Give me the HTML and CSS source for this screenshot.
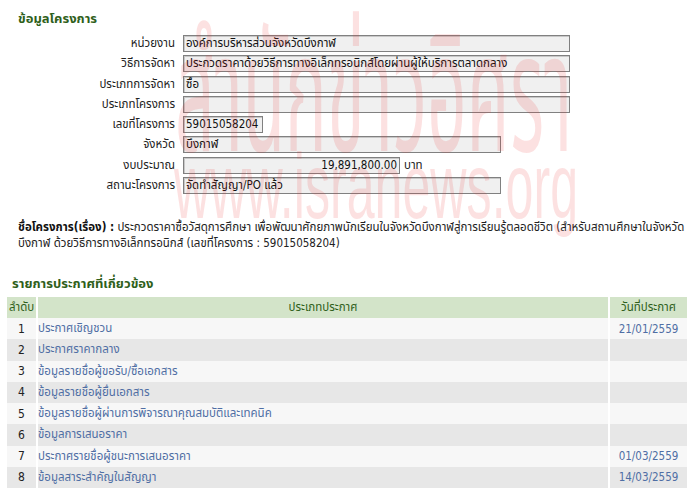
FILE: index.html
```html
<!DOCTYPE html>
<html lang="th">
<head>
<meta charset="utf-8">
<title>ข้อมูลโครงการ</title>
<link rel="stylesheet" href="styles.css">
</head>
<body>
<div class="page">
  <h2 class="section-title">ข้อมูลโครงการ</h2>
  <div class="info">
    <div class="label">หน่วยงาน</div>
    <div class="value"><span class="box w-full">องค์การบริหารส่วนจังหวัดบึงกาฬ</span></div>
    <div class="label">วิธีการจัดหา</div>
    <div class="value"><span class="box w-full">ประกวดราคาด้วยวิธีการทางอิเล็กทรอนิกส์โดยผ่านผู้ให้บริการตลาดกลาง</span></div>
    <div class="label">ประเภทการจัดหา</div>
    <div class="value"><span class="box w-full">ซื้อ</span></div>
    <div class="label">ประเภทโครงการ</div>
    <div class="value"><span class="box w-full"></span></div>
    <div class="label">เลขที่โครงการ</div>
    <div class="value"><span class="box w-num">59015058204</span></div>
    <div class="label">จังหวัด</div>
    <div class="value"><span class="box w-mid">บึงกาฬ</span></div>
    <div class="label">งบประมาณ</div>
    <div class="value"><span class="box w-budget num-right">19,891,800.00</span><span class="unit">บาท</span></div>
    <div class="label">สถานะโครงการ</div>
    <div class="value"><span class="box w-mid">จัดทำสัญญา/PO แล้ว</span></div>
  </div>

  <p class="project-name"><b>ชื่อโครงการ(เรื่อง) :</b> ประกวดราคาซื้อวัสดุการศึกษา เพื่อพัฒนาศักยภาพนักเรียนในจังหวัดบึงกาฬสู่การเรียนรู้ตลอดชีวิต (สำหรับสถานศึกษาในจังหวัดบึงกาฬ ด้วยวิธีการทางอิเล็กทรอนิกส์ (เลขที่โครงการ : 59015058204)</p>

  <h2 class="section-title list-title">รายการประกาศที่เกี่ยวข้อง</h2>
  <table class="ann">
    <thead>
      <tr><th class="c-no">ลำดับ</th><th class="c-type">ประเภทประกาศ</th><th class="c-date">วันที่ประกาศ</th></tr>
    </thead>
    <tbody>
      <tr><td class="c-no">1</td><td><a href="#">ประกาศเชิญชวน</a></td><td class="c-date"><a href="#">21/01/2559</a></td></tr>
      <tr><td class="c-no">2</td><td><a href="#">ประกาศราคากลาง</a></td><td class="c-date"></td></tr>
      <tr><td class="c-no">3</td><td><a href="#">ข้อมูลรายชื่อผู้ขอรับ/ซื้อเอกสาร</a></td><td class="c-date"></td></tr>
      <tr><td class="c-no">4</td><td><a href="#">ข้อมูลรายชื่อผู้ยื่นเอกสาร</a></td><td class="c-date"></td></tr>
      <tr><td class="c-no">5</td><td><a href="#">ข้อมูลรายชื่อผู้ผ่านการพิจารณาคุณสมบัติและเทคนิค</a></td><td class="c-date"></td></tr>
      <tr><td class="c-no">6</td><td><a href="#">ข้อมูลการเสนอราคา</a></td><td class="c-date"></td></tr>
      <tr><td class="c-no">7</td><td><a href="#">ประกาศรายชื่อผู้ชนะการเสนอราคา</a></td><td class="c-date"><a href="#">01/03/2559</a></td></tr>
      <tr><td class="c-no">8</td><td><a href="#">ข้อมูลสาระสำคัญในสัญญา</a></td><td class="c-date"><a href="#">14/03/2559</a></td></tr>
    </tbody>
  </table>

  <div class="watermark" aria-hidden="true">
    <div class="wm-th">สำนักข่าวอิศรา</div>
    <div class="wm-en">www.isranews.org</div>
  </div>
</div>
</body>
</html>
```
FILE: styles.css
```css
html, body {
  margin: 0;
  padding: 0;
  background: #ffffff;
}
body {
  font-family: Tahoma, "DejaVu Sans Condensed", "Noto Sans Thai", Loma, Garuda, sans-serif;
  font-size: 12px;
  color: #222222;
}
.page {
  position: relative;
  width: 700px;
  height: 498px;
  overflow: hidden;
}
.section-title {
  margin: 0;
  padding: 11px 0 0 18px;
  font-size: 13px;
  font-weight: bold;
  color: #2f5f1b;
  line-height: 16px;
}
.info {
  display: grid;
  grid-template-columns: 175px 1fr;
  column-gap: 8px;
  grid-auto-rows: 17px;
  row-gap: 3.3px;
  margin-top: 8px;
}
.label {
  text-align: right;
  line-height: 17px;
  font-size: 11.5px;
  color: #222;
}
.value {
  display: flex;
  align-items: center;
  gap: 4px;
}
.box {
  box-sizing: border-box;
  display: block;
  height: 17px;
  line-height: 15px;
  padding: 0 2px;
  background: #f0f0f0;
  border: 1px solid #808080;
  box-shadow: inset 1px 1px 0 #c8c8c8;
  font-size: 11.5px;
  color: #111;
  white-space: nowrap;
  overflow: hidden;
}
.w-full { width: 387px; }
.w-num { width: 80px; }
.w-mid { width: 318px; }
.w-budget { width: 217px; }
.num-right { text-align: right; }
.unit { font-size: 11.5px; }
.project-name {
  margin: 25px 0 0 0;
  padding: 0 10px 0 18px;
  line-height: 16px;
  font-size: 11.5px;
  color: #222;
}
.project-name b { color: #111; }
.list-title {
  padding: 25px 0 0 12px;
}
.ann {
  margin: 5px 0 0 7px;
  width: 680px;
  border-collapse: collapse;
  font-size: 11.5px;
}
.ann th {
  background: #d3e4c9;
  color: #2f5f1b;
  font-weight: normal;
  height: 21px;
  padding: 0;
  border-right: 2px solid #ffffff;
}
.ann th:last-child, .ann td:last-child { border-right: 0; }
.ann td {
  height: 21.25px;
  padding: 0;
  border-right: 2px solid #ffffff;
}
.ann tbody tr:nth-child(odd) td { background: #f7f7f7; }
.ann tbody tr:nth-child(even) td { background: #e7e7e7; }
.ann th.c-no { width: 27px; text-align: left; padding-left: 2px; }
.ann td.c-no { text-align: center; color: #222; font-size: 12px; }
.ann .c-date { width: 77px; text-align: center; }
.ann td a { color: #4f6ea4; text-decoration: none; }
.ann tbody td:nth-child(2) { padding-left: 0; }
.watermark {
  position: absolute;
  left: 0;
  top: 0;
  width: 700px;
  pointer-events: none;
  color: rgba(235, 40, 40, 0.14);
  font-family: "Liberation Sans", "Noto Sans Thai", Loma, sans-serif;
}
.wm-th {
  position: absolute;
  left: 175px;
  top: 11px;
  font-size: 110px;
  line-height: 1;
  white-space: nowrap;
  transform-origin: 0 0;
  transform: scale(0.63, 1.5);
}
.wm-en {
  position: absolute;
  left: 174px;
  top: 136px;
  font-size: 92px;
  line-height: 100px;
  white-space: nowrap;
  transform-origin: 0 0;
  transform: scaleX(0.545);
}
```
